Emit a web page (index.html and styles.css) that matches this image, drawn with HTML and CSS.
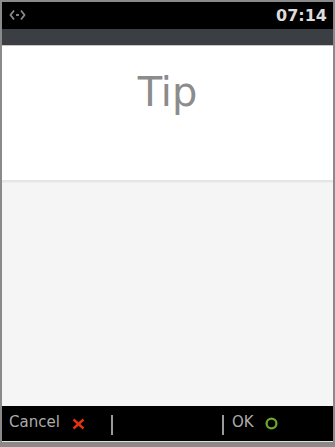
FILE: index.html
```html
<!DOCTYPE html>
<html>
<head>
<meta charset="utf-8">
<link rel="stylesheet" href="styles.css">
</head>
<body>
<div class="frame">
  <div class="status">
    <svg class="conn" width="17" height="12" viewBox="0 0 17 12">
      <polyline points="5,1.5 1.5,6 5,10.5" fill="none" stroke="#8a8a8a" stroke-width="1.8"/>
      <polyline points="12,1.5 15.5,6 12,10.5" fill="none" stroke="#8a8a8a" stroke-width="1.8"/>
      <line x1="7" y1="6" x2="10" y2="6" stroke="#8a8a8a" stroke-width="1.8"/>
    </svg>
    <span class="time">07:14</span>
  </div>
  <div class="subbar"></div>
  <div class="subline"></div>
  <div class="head">
    <h1 class="title">Tip</h1>
  </div>
  <div class="body"></div>
  <div class="keys">
    <div class="cell cell-left">
      <span class="label">Cancel</span>
      <svg class="icon" width="13" height="12" viewBox="0 0 13 12">
        <line x1="1.5" y1="1.5" x2="11.5" y2="10.5" stroke="#e2330f" stroke-width="2.4"/>
        <line x1="11.5" y1="1.5" x2="1.5" y2="10.5" stroke="#e2330f" stroke-width="2.4"/>
      </svg>
    </div>
    <div class="sep"></div>
    <div class="cell cell-mid"></div>
    <div class="sep"></div>
    <div class="cell cell-right">
      <span class="label">OK</span>
      <svg class="icon ok" width="13" height="13" viewBox="0 0 13 13">
        <circle cx="6.5" cy="6.5" r="4.9" fill="none" stroke="#6ba82c" stroke-width="2.3"/>
      </svg>
    </div>
  </div>
  <div class="bottomline"></div>
</div>
</body>
</html>
```

FILE: styles.css
```css
html, body {
  margin: 0;
  padding: 0;
  background: #8a8a8a;
}
.frame {
  width: 335px;
  height: 447px;
  box-sizing: border-box;
  border: 2px solid #8a8a8a;
  border-bottom-width: 5px;
  display: flex;
  flex-direction: column;
  font-family: "DejaVu Sans", sans-serif;
  overflow: hidden;
}
.status {
  height: 27px;
  background: #000;
  display: flex;
  align-items: center;
  justify-content: space-between;
  padding: 0 6px 0 7px;
  flex: none;
}
.conn {
  display: block;
  margin-top: -1px;
}
.time {
  color: #dcdcdc;
  font-weight: bold;
  font-size: 16px;
  line-height: 1;
  margin-top: 1px;
}
.subbar {
  height: 16px;
  background: #3b3e42;
  flex: none;
}
.subline {
  height: 1px;
  background: #c8c8c8;
  flex: none;
}
.head {
  height: 134px;
  background: #fff;
  flex: none;
  display: flex;
  justify-content: center;
}
.title {
  margin: 26px 0 0;
  font-weight: normal;
  font-size: 40px;
  line-height: 1;
  color: #8c8c8c;
}
.body {
  flex: 1;
  background: #f5f5f5;
  border-top: 2px solid #e6e6e6;
  box-shadow: inset 0 1px 1px #eeeeee;
}
.keys {
  height: 35px;
  background: #000;
  flex: none;
  display: flex;
  align-items: center;
}
.cell {
  display: flex;
  align-items: center;
  height: 100%;
}
.cell-left {
  width: 109px;
  padding-left: 7px;
  box-sizing: border-box;
}
.cell-mid {
  width: 109px;
}
.cell-right {
  flex: 1;
  padding-left: 8px;
}
.label {
  color: #acacac;
  font-size: 15px;
  line-height: 1;
  margin-top: -3px;
}
.icon {
  display: block;
  margin-left: 12px;
}
.ok {
  margin-left: 11px;
}
.sep {
  width: 2px;
  height: 20px;
  background: #9a9a9a;
  flex: none;
  margin-top: 2px;
}
.bottomline {
  height: 1px;
  background: #e0e0e0;
  flex: none;
}
```
